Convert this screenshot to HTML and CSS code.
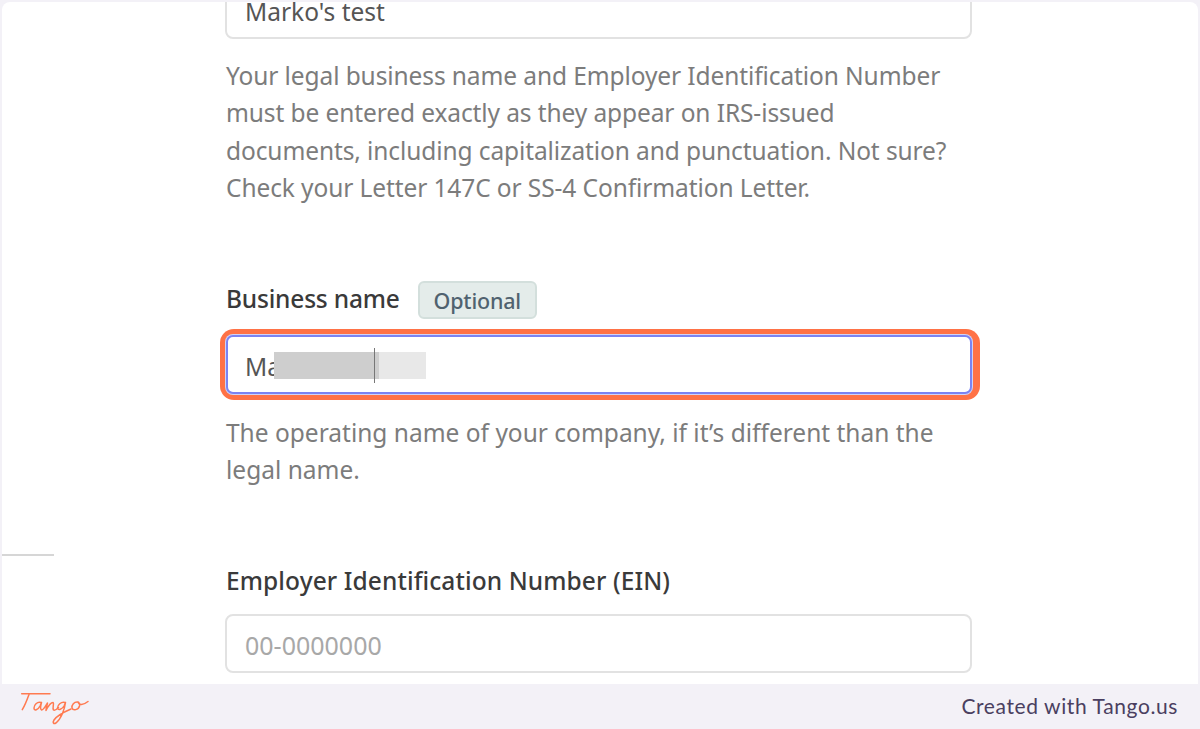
FILE: index.html
```html
<!DOCTYPE html>
<html lang="en">
<head>
<meta charset="utf-8">
<title>Business details</title>
<link rel="stylesheet" href="styles.css">
</head>
<body>
<main class="sheet">
  <aside class="rail"><div class="rail-line"></div></aside>
  <form class="form">
    <div class="input input-first"><span class="value">Marko's test</span></div>
    <p class="help help-first">Your legal business name and Employer Identification Number must be entered exactly as they appear on IRS-issued documents, including capitalization and punctuation. Not sure? Check your Letter 147C or SS-4 Confirmation Letter.</p>

    <div class="label-row label-row-business">
      <span class="label label-business">Business name</span>
      <span class="badge">Optional</span>
    </div>
    <div class="focus-ring">
      <div class="input input-focus">
        <span class="value">Ma</span>
        <span class="redact"><span class="redact-dark"></span><span class="redact-light"></span><span class="caret"></span></span>
      </div>
    </div>
    <p class="help help-business">The operating name of your company, if it’s different than the legal name.</p>

    <div class="label-row label-row-ein">
      <span class="label label-ein">Employer Identification Number (EIN)</span>
    </div>
    <div class="input input-ein"><span class="placeholder">00-0000000</span></div>
  </form>
</main>
<footer class="footer">
  <svg class="logo" viewBox="0 0 80 38" width="80" height="38" fill="none" stroke="#ff7a50" stroke-width="1.5" stroke-linecap="round" stroke-linejoin="round" aria-label="Tango logo" role="img">
    <path d="M6.700 5.700H35"/>
    <path d="M14 6.500C12 12 9.500 18 7.300 21.700"/>
    <path d="M26 14.500C22 13.500 19 17 19 20C19 23.500 23 22 25 18L26.500 14.500C25.500 18 25 21 26.500 22C28.500 22.500 30.500 18 32.500 15C32 17.500 31 20 31 22.500C33 18.500 35.500 14.500 38 14.500C39.500 15 37 20 38.500 22C40 23 42 21 43.500 19.500"/>
    <path d="M50 14.500C46 13.500 42.500 17 42.500 20C43 23 47.500 21 49 18L50.500 14.500C49.500 22 46 31 41 35C38.500 36.500 37.500 34.500 39 32C42 27.500 49 24 56 21"/>
    <path d="M63 14C59 13.500 56.500 17 57 20C58 23 63.500 22 64.500 18C65 15.500 63.500 14 63 14C64 17 68 17.500 73 13.500"/>
  </svg>
  <span class="credit">Created with Tango.us</span>
</footer>
</body>
</html>
```
FILE: styles.css
```css
* { box-sizing: border-box; }
html, body { margin: 0; height: 729px; overflow: hidden; }
body {
  display: flex;
  flex-direction: column;
  background: #f3f1f7;
  font-family: "Noto Sans", "Open Sans", sans-serif;
}
.sheet {
  display: flex;
  height: 682px;
  flex: none;
  margin: 2px 2px 0;
  background: #fff;
  border-radius: 8px 8px 0 0;
  overflow: hidden;
}
.rail { width: 52px; flex: none; padding-top: 552px; }
.rail-line { height: 2px; background: #d6d6d6; }
.form { width: 747px; flex: none; margin-left: 171px; margin-top: -22px; }
.input {
  display: flex;
  align-items: center;
  height: 59px;
  padding: 0 18px;
  background: #fff;
  border: 2px solid #e2e2e2;
  border-radius: 8px;
  font-size: 24.500px;
  color: #555;
}
.input-first { padding-top: 4px; }
.placeholder { color: #a8a8a8; font-size: 25px; }
.help {
  margin: 0;
  width: 730px;
  font-size: 24.500px;
  line-height: 37.300px;
  color: #7c7c7c;
  padding-left: 1px;
}
.help-first { margin-top: 18px; letter-spacing: -0.1px; }
.help-business { margin-top: 14px; }
.label-row { display: flex; align-items: center; gap: 18px; height: 38px; padding-left: 1px; }
.label-row-business { margin-top: 75px; }
.label-row-ein { margin-top: 73px; }
.label { font-size: 24.500px; font-weight: 500; color: #3a3a3a; }
.label-business { letter-spacing: -0.2px; padding-bottom: 4px; }
.label-ein { letter-spacing: 0.1px; }
.badge {
  display: flex;
  align-items: center;
  height: 38px;
  padding: 0 14px;
  background: #e4ecea;
  border: 2px solid #d3dfdc;
  border-radius: 6px;
  font-size: 21.500px;
  font-weight: 500;
  color: #50626f;
  letter-spacing: -0.2px;
}
.focus-ring {
  margin: 10px -8px 0 -5px;
  padding: 6px 8px 6px 6px;
  background: #ff7246;
  border-radius: 14px;
}
.input-focus {
  position: relative;
  border: 2px solid #7b83f2;
  border-radius: 7px;
  padding: 3px 0 0 17px;
  box-shadow: 0 0 0 1px #cfd3f7;
}
.redact {
  position: absolute;
  left: 46px;
  top: 15px;
  display: flex;
  height: 27px;
}
.redact-dark { width: 105px; background: #cecece; }
.redact-light { width: 47px; background: #e8e8e8; }
.caret {
  position: absolute;
  left: 100px;
  top: -4px;
  width: 1px;
  height: 35px;
  background: #777;
}
.input-ein { margin-top: 14px; padding-top: 3px; }
.footer {
  flex: 1;
  display: flex;
  align-items: center;
  justify-content: space-between;
  padding: 0 22px 0 15px;
}
.logo { display: block; }
.credit {
  font-family: "Lato", sans-serif;
  font-size: 21px;
  color: #4a3f60;
  letter-spacing: 0.6px;
  padding-bottom: 2px;
}
```
